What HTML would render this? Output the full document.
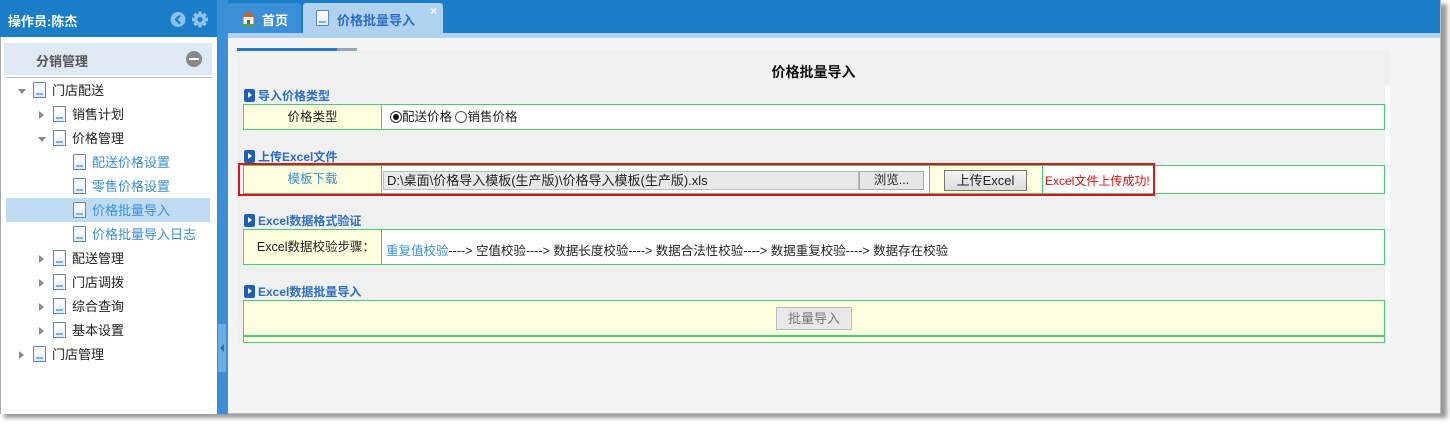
<!DOCTYPE html>
<html><head><meta charset="utf-8"><style>
*{margin:0;padding:0;box-sizing:border-box}
body{width:1450px;height:425px;background:#fff;position:relative;overflow:hidden;font-family:"Liberation Sans","Noto Sans CJK SC",sans-serif;font-size:12.5px;color:#222}
.a{position:absolute}
.shadow{left:4px;top:4px;width:1443px;height:414px;background:#999;filter:blur(2px)}
.frame{left:0;top:0;width:1441px;height:414px;background:#f4f4f4;border:1px solid #bbb;border-top:none;border-left:none}
.doc{position:absolute;width:13px;height:16px;border:1px solid #5a86c0;background:linear-gradient(#fff,#e3eefb);border-radius:1px}
.doc:after{content:"";position:absolute;left:2px;right:2px;bottom:2px;height:2px;background:#7fb2e8}
.tri-r{position:absolute;width:0;height:0;border-left:5px solid #888;border-top:4px solid transparent;border-bottom:4px solid transparent}
.tri-d{position:absolute;width:0;height:0;border-top:5px solid #888;border-left:4px solid transparent;border-right:4px solid transparent}
.ti{position:absolute;font-size:13px;line-height:16px;white-space:nowrap}
.sec{position:absolute;left:244px;font-weight:bold;color:#2d6fc4;font-size:12px;line-height:14px;white-space:nowrap}
.sec i{display:inline-block;width:11px;height:13px;background:#1f5fb8;border-radius:2px;vertical-align:-2px;margin-right:3px;position:relative}
.sec i:after{content:"";position:absolute;left:4px;top:3px;border-left:4px solid #fff;border-top:3.5px solid transparent;border-bottom:3.5px solid transparent}
.tb{position:absolute;left:243px;width:1142px;border:1px solid #44cc77;background:#fff}
.lab{position:absolute;left:0;top:0;bottom:0;width:138px;background:#ffffe0;border-right:1px solid #44cc77;text-align:center}
.btn{position:absolute;border:1px solid #999;background:linear-gradient(#f4f4f4,#dcdcdc);text-align:center;font-size:12.5px}
</style></head><body>
<div class="a shadow"></div>
<div class="a frame"></div>
<div class="a" style="left:0;top:0;width:217px;height:414px;background:#fff;border-left:1px solid #aaa"></div>
<div class="a" style="left:0;top:0;width:217px;height:37px;background:#1a7dc8"></div>
<div class="a" style="left:8px;top:11px;color:#fff;font-weight:bold;font-size:13px">操作员:陈杰</div>
<svg class="a" style="left:170px;top:11px" width="40" height="17"><circle cx="8" cy="8.5" r="7.5" fill="#8cc1ee"/><path d="M10 4.5 L6 8.5 L10 12.5" stroke="#1a7dc8" stroke-width="2.2" fill="none"/><g transform="translate(30,8.5)" fill="#8cc1ee"><circle r="6"/><rect x="-1.8" y="-8" width="3.6" height="16"/><rect x="-8" y="-1.8" width="16" height="3.6"/><rect x="-1.8" y="-8" width="3.6" height="16" transform="rotate(45)"/><rect x="-1.8" y="-8" width="3.6" height="16" transform="rotate(-45)"/><circle r="2.6" fill="#1a7dc8"/></g></svg>
<div class="a" style="left:4px;top:43px;width:208px;height:32px;background:#dfe9f4"></div>
<div class="a" style="left:36px;top:51px;font-weight:bold;font-size:13px;color:#555">分销管理</div>
<div class="a" style="left:186px;top:51px;width:16px;height:16px;border-radius:50%;background:#888"><div style="position:absolute;left:3px;top:7px;width:10px;height:2px;background:#fff"></div></div>
<div class="a" style="left:5px;top:77px;width:207px;height:1px;background:#bbb"></div>
<div class="a" style="left:6px;top:198px;width:204px;height:24px;background:#c0dcf3"></div>
<div class="tri-d" style="left:18px;top:89px"></div><div class="doc" style="left:33px;top:82px"></div><div class="ti" style="left:52px;top:83px">门店配送</div>
<div class="tri-r" style="left:39px;top:111px"></div><div class="doc" style="left:53px;top:106px"></div><div class="ti" style="left:72px;top:107px">销售计划</div>
<div class="tri-d" style="left:38px;top:137px"></div><div class="doc" style="left:53px;top:130px"></div><div class="ti" style="left:72px;top:131px">价格管理</div>
<div class="doc" style="left:73px;top:154px"></div><div class="ti" style="left:92px;top:155px;color:#3a8fd6">配送价格设置</div>
<div class="doc" style="left:73px;top:178px"></div><div class="ti" style="left:92px;top:179px;color:#3a8fd6">零售价格设置</div>
<div class="doc" style="left:73px;top:202px"></div><div class="ti" style="left:92px;top:203px;color:#3a8fd6">价格批量导入</div>
<div class="doc" style="left:73px;top:226px"></div><div class="ti" style="left:92px;top:227px;color:#3a8fd6">价格批量导入日志</div>
<div class="tri-r" style="left:39px;top:255px"></div><div class="doc" style="left:53px;top:250px"></div><div class="ti" style="left:72px;top:251px">配送管理</div>
<div class="tri-r" style="left:39px;top:279px"></div><div class="doc" style="left:53px;top:274px"></div><div class="ti" style="left:72px;top:275px">门店调拨</div>
<div class="tri-r" style="left:39px;top:303px"></div><div class="doc" style="left:53px;top:298px"></div><div class="ti" style="left:72px;top:299px">综合查询</div>
<div class="tri-r" style="left:39px;top:327px"></div><div class="doc" style="left:53px;top:322px"></div><div class="ti" style="left:72px;top:323px">基本设置</div>
<div class="tri-r" style="left:19px;top:351px"></div><div class="doc" style="left:33px;top:346px"></div><div class="ti" style="left:52px;top:347px">门店管理</div>
<div class="a" style="left:217px;top:0;width:11px;height:414px;background:#3a8fd6"></div>
<div class="a" style="left:218px;top:324px;width:8px;height:48px;background:#6aaee6"></div>
<div class="a" style="left:220px;top:344px;border-right:4px solid #2a6fb0;border-top:4px solid transparent;border-bottom:4px solid transparent"></div>
<div class="a" style="left:228px;top:0;width:1212px;height:33px;background:#1a7dc8"></div>
<div class="a" style="left:228px;top:33px;width:1212px;height:5px;background:#aed2ef"></div>
<div class="a" style="left:228px;top:3px;width:73px;height:30px;background:#3a8fd6;border-radius:3px 3px 0 0"></div>
<svg class="a" style="left:240px;top:10px" width="17" height="16"><path d="M1 8 L8.5 1 L16 8" fill="#c8642a"/><rect x="3.5" y="7" width="10" height="8" fill="#f2f2f2"/><rect x="7" y="10" width="3" height="5" fill="#8a5a2a"/><rect x="1" y="14" width="15" height="2" fill="#5aa02c"/></svg>
<div class="a" style="left:262px;top:10px;color:#fff;font-weight:bold;font-size:13px">首页</div>
<div class="a" style="left:303px;top:3px;width:140px;height:33px;background:#aed2ef;border-radius:3px 3px 0 0"></div>
<div class="doc" style="left:316px;top:10px"></div>
<div class="a" style="left:337px;top:10px;color:#2d6fc4;font-weight:bold;font-size:13px">价格批量导入</div>
<div class="a" style="left:430px;top:4px;color:#fff;font-size:12px;font-weight:bold">×</div>
<div class="a" style="left:237px;top:48px;width:100px;height:3px;background:#2a75c8"></div>
<div class="a" style="left:337px;top:48px;width:20px;height:3px;background:#98a4b4"></div>
<div class="a" style="left:237px;top:51px;width:1153px;height:293px;background:#f0f0f0"></div>
<div class="a" style="left:1385px;top:86px;width:5px;height:258px;background:#fff"></div>
<div class="a" style="left:237px;top:62px;width:1153px;text-align:center;font-weight:bold;font-size:14px;color:#111">价格批量导入</div>

<div class="sec" style="top:89px"><i></i>导入价格类型</div>
<div class="tb" style="top:104px;height:26px"><div class="lab" style="line-height:24px">价格类型</div>
<div class="a" style="left:146px;top:4px;line-height:16px;white-space:nowrap"><span style="display:inline-block;width:12px;height:12px;border:1px solid #333;border-radius:50%;vertical-align:-2px;position:relative"><span style="position:absolute;left:2px;top:2px;width:6px;height:6px;border-radius:50%;background:#111"></span></span>配送价格 <span style="display:inline-block;width:12px;height:12px;border:1px solid #555;border-radius:50%;vertical-align:-2px"></span>销售价格</div></div>

<div class="sec" style="top:150px"><i></i>上传Excel文件</div>
<div class="tb" style="top:165px;height:29px"><div class="lab" style="line-height:27px;color:#3a8fd6">模板下载</div>
<div class="a" style="left:139px;top:5px;width:476px;height:19px;background:#e8e8e8;border:1px solid #bbb;padding-left:3px;line-height:17px;font-size:13px;white-space:nowrap;overflow:hidden">D:\桌面\价格导入模板(生产版)\价格导入模板(生产版).xls</div>
<div class="btn" style="left:615px;top:5px;width:65px;height:19px;line-height:17px;background:#e6e6e6;border-color:#aaa">浏览...</div>
<div class="a" style="left:685px;top:0;width:114px;height:27px;background:#ffffe0;border-left:1px solid #44cc77;border-right:1px solid #44cc77"></div>
<div class="btn" style="left:700px;top:4px;width:83px;height:21px;line-height:19px;font-size:13px;border-color:#777">上传Excel</div>
<div class="a" style="left:801px;top:6px;color:#e01010;font-size:12px;white-space:nowrap">Excel文件上传成功!</div></div>
<div class="a" style="left:238px;top:163px;width:917px;height:33px;border:2px solid #e0141e"></div>

<div class="sec" style="top:214px"><i></i>Excel数据格式验证</div>
<div class="tb" style="top:229px;height:36px"><div class="lab" style="line-height:34px;text-align:right;padding-right:6px;white-space:nowrap">Excel数据校验步骤：</div>
<div class="a" style="left:142px;top:10px;white-space:nowrap"><span style="color:#3a8fd6">重复值校验</span>----&gt; 空值校验----&gt; 数据长度校验----&gt; 数据合法性校验----&gt; 数据重复校验----&gt; 数据存在校验</div></div>

<div class="sec" style="top:285px"><i></i>Excel数据批量导入</div>
<div class="tb" style="top:300px;height:43px;background:#ffffe0"><div class="a" style="left:0;right:0;top:34px;height:2px;background:#44cc77"></div>
<div class="btn" style="left:532px;top:6px;width:76px;height:23px;line-height:21px;color:#777;border-color:#bbb;background:#e8e8e8;font-size:13px">批量导入</div></div>
</body></html>
